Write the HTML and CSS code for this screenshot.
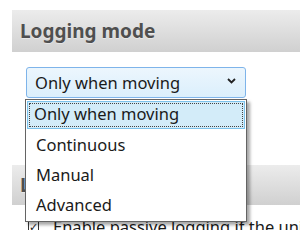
FILE: index.html
```html
<!DOCTYPE html>
<html>
  <head>
    <meta charset="UTF-8" />
    <title>Logging mode</title>
    <link rel="stylesheet" href="styles.css">
  </head>
  <body>
    <div class="section">
      <div class="section-header">Logging mode</div>
      <div class="select-wrap">
        <div class="select">
          <span class="select-value">Only when moving</span>
          <svg class="chevron" width="9" height="6" viewBox="0 0 9 6">
            <path d="M1 1 L4.5 4.5 L8 1" fill="none" stroke="#222" stroke-width="1.8" />
          </svg>
        </div>
        <ul class="options">
          <li class="option selected">Only when moving</li>
          <li class="option">Continuous</li>
          <li class="option">Manual</li>
          <li class="option">Advanced</li>
        </ul>
      </div>
    </div>
    <div class="section">
      <div class="section-header">Log storage</div>
      <label class="check-row">
        <span class="checkbox">&#10003;</span>
        <span class="check-label">Enable passive logging if the unit is idle</span>
      </label>
    </div>
  </body>
</html>
```

FILE: styles.css
```css
body {
  margin: 0;
  padding: 10px 0 0 12px;
  background-color: #fff;
  font-family: "Noto Sans", "Open Sans", sans-serif;
  color: #1a1a1a;
  overflow: hidden;
}
.section-header {
  height: 42px;
  line-height: 42px;
  padding-left: 8px;
  background: linear-gradient(#ececec, #d0d0d0);
  color: #4f4f4f;
  font-size: 19px;
  font-weight: bold;
  text-shadow: 0 1px 0 rgba(255, 255, 255, 0.4);
}
.section + .section {
  margin-top: 67px;
}
.section + .section .section-header {
  height: 40px;
  line-height: 40px;
}
.select-wrap {
  position: relative;
  margin: 15px 0 0 14px;
  width: 220px;
}
.select {
  height: 29px;
  display: flex;
  align-items: center;
  justify-content: space-between;
  padding: 0 9px 0 8px;
  border: 1px solid #7eb4ea;
  border-radius: 3px;
  background: linear-gradient(#ecf6fd, #dbeffc);
  font-size: 16.5px;
}
.chevron {
  margin-top: -4px;
}
.options {
  position: absolute;
  top: 32px;
  left: -1px;
  width: 218px;
  margin: 0;
  padding: 1px;
  list-style: none;
  background: #fff;
  border: 1px solid #646464;
  box-shadow: 3px 3px 3px rgba(0, 0, 0, 0.35);
  font-size: 16.5px;
}
.option {
  height: 30px;
  line-height: 28px;
  padding-left: 8px;
  border: 1px solid transparent;
  box-sizing: border-box;
}
.option.selected {
  height: 28px;
  line-height: 24px;
  padding-left: 6px;
  border: 1px solid #7cc3ec;
  background: #d3ecf9;
  outline: 1px dotted #444;
  outline-offset: -3px;
  margin-bottom: 1px;
}
.check-row {
  display: flex;
  align-items: center;
  gap: 14px;
  margin: 10px 0 0 16px;
  font-size: 16.5px;
  white-space: nowrap;
}
.checkbox {
  width: 12px;
  height: 12px;
  border: 1px solid #333;
  font-size: 11px;
  line-height: 12px;
  text-align: center;
}
```
